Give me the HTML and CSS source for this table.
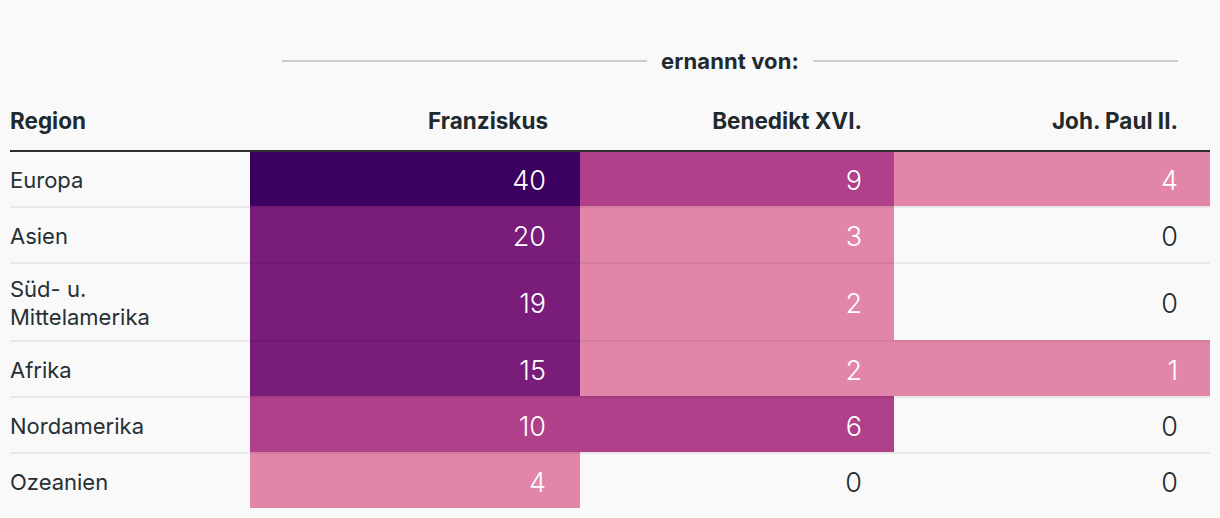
FILE: index.html
```html
<!DOCTYPE html>
<html lang="de">
<head>
<meta charset="utf-8">
<title>Ernennungen nach Region</title>
<link rel="stylesheet" href="styles.css">
</head>
<body>
<div class="wrap">
<table class="tbl">
  <colgroup>
    <col class="c-region">
    <col class="c-f">
    <col class="c-b">
    <col class="c-j">
  </colgroup>
  <thead>
    <tr class="spanner-row">
      <th class="blank"></th>
      <th colspan="3" class="spanner">
        <div class="spanner-inner">
          <span class="rule"></span>
          <span class="spanner-label">ernannt von:</span>
          <span class="rule"></span>
        </div>
      </th>
    </tr>
    <tr class="label-row">
      <th class="lbl lbl-left">Region</th>
      <th class="lbl">Franziskus</th>
      <th class="lbl">Benedikt XVI.</th>
      <th class="lbl">Joh. Paul II.</th>
    </tr>
  </thead>
  <tbody>
    <tr class="first">
      <td class="reg">Europa</td>
      <td class="num col-f s1">40</td>
      <td class="num s3">9</td>
      <td class="num s4">4</td>
    </tr>
    <tr>
      <td class="reg">Asien</td>
      <td class="num col-f s2">20</td>
      <td class="num s4">3</td>
      <td class="num">0</td>
    </tr>
    <tr>
      <td class="reg">Süd- u.<br>Mittelamerika</td>
      <td class="num col-f s2">19</td>
      <td class="num s4">2</td>
      <td class="num">0</td>
    </tr>
    <tr>
      <td class="reg">Afrika</td>
      <td class="num col-f s2">15</td>
      <td class="num s4">2</td>
      <td class="num s4">1</td>
    </tr>
    <tr>
      <td class="reg">Nordamerika</td>
      <td class="num col-f s3">10</td>
      <td class="num s3">6</td>
      <td class="num">0</td>
    </tr>
    <tr>
      <td class="reg">Ozeanien</td>
      <td class="num col-f s4">4</td>
      <td class="num">0</td>
      <td class="num">0</td>
    </tr>
  </tbody>
</table>
</div>
</body>
</html>
```

FILE: styles.css
```css
html, body {
  margin: 0;
  padding: 0;
  background: #f9f9f9;
}

body {
  font-family: Inter, "Noto Sans", "Liberation Sans", sans-serif;
  color: #1f2a2e;
}

.wrap {
  padding: 47px 10px 0 10px;
}

.tbl {
  width: 1200px;
  table-layout: fixed;
  border-collapse: separate;
  border-spacing: 0;
}

.c-region { width: 240px; }
.c-f { width: 330px; }
.c-b { width: 314px; }
.c-j { width: 316px; }

th {
  font-weight: 700;
  font-size: 22px;
  line-height: 28px;
  padding: 0;
}

.spanner {
  padding: 0 32px 31px 32px;
}

.spanner-inner {
  display: flex;
  align-items: center;
  gap: 14px;
}

.rule {
  flex: 1;
  height: 2px;
  background: #cbcbcb;
}

.spanner-label {
  font-size: 22px;
  font-weight: 700;
  letter-spacing: 0.1px;
}

.lbl {
  text-align: right;
  padding: 1px 32px 15px 0;
  border-bottom: 2px solid #2b2f31;
  font-size: 22.5px;
}

.lbl-left {
  text-align: left;
  padding-left: 0;
}

td {
  box-sizing: border-box;
  height: 56px;
  padding: 11px 32px 9px 0;
  border-top: 2px solid rgba(0, 0, 0, 0.065);
  vertical-align: middle;
}

tr.first td {
  border-top: none;
  height: 54px;
}

.reg {
  font-size: 22px;
  line-height: 28px;
  color: #263034;
}

.num {
  text-align: right;
  font-size: 27px;
  line-height: 28px;
  font-weight: 300;
  color: #1f2a2e;
  padding-top: 12px;
  padding-bottom: 8px;
  padding-right: 32px;
}

.num.col-f {
  padding-right: 34px;
}

.s1 { background-color: #3c0060; color: #fff; }
.s2 { background-color: #791c7a; color: #fff; }
.s3 { background-color: #b04089; color: #fff; }
.s4 { background-color: #e286a9; color: #fff; }
```
